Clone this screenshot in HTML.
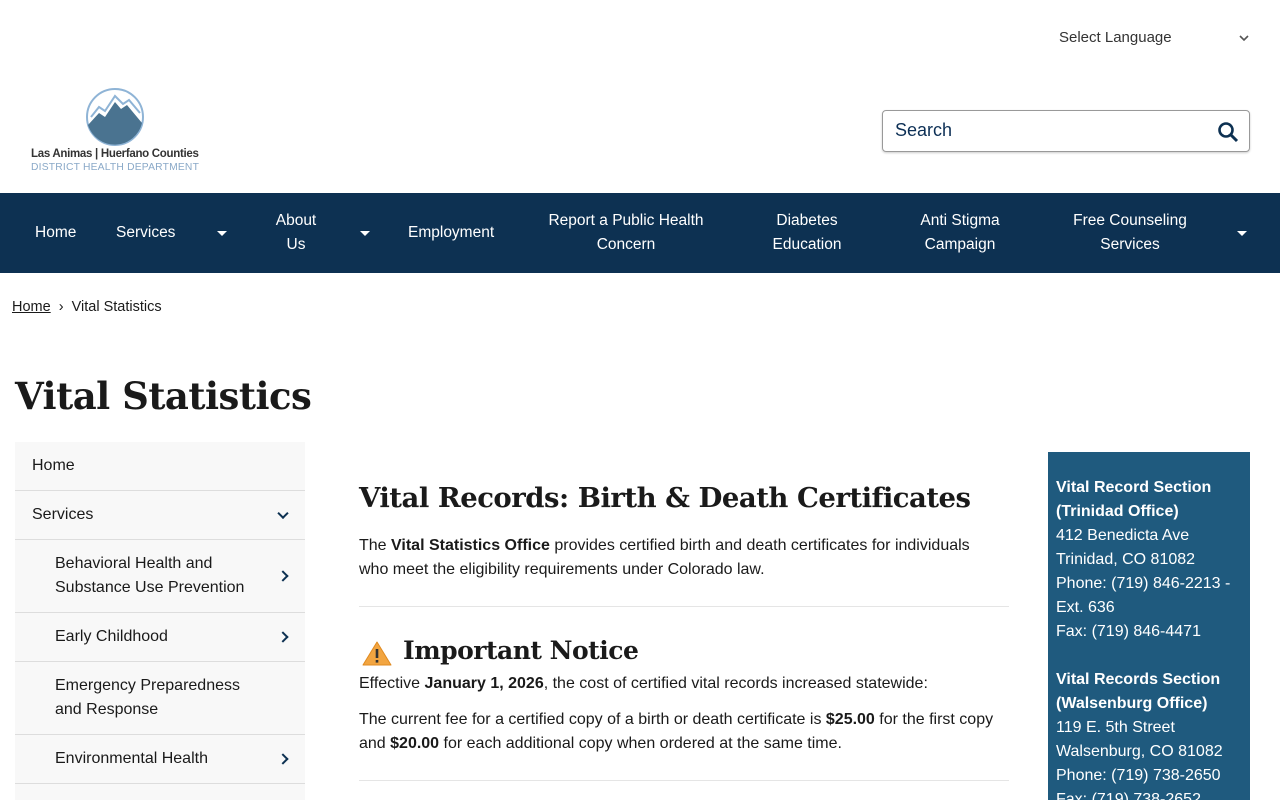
<!DOCTYPE html>
<html style="height:800px;overflow:hidden"><head><meta charset="utf-8"><style>
*{box-sizing:border-box;margin:0;padding:0}
body{width:1280px;height:800px;overflow:hidden;font-family:"Liberation Sans",sans-serif;color:#1a1a1a;background:#fff;position:relative;font-size:15.5px}
.abs{position:absolute}
.lang{left:1059px;top:29px;font-size:15px;color:#333}
.search{left:882px;top:110px;width:368px;height:42px;border:1px solid #999;border-radius:4px;box-shadow:0 1px 2px rgba(0,0,0,.2)}
.search span{position:absolute;left:12px;top:9px;font-size:18px;color:#0c2f55}
nav{position:absolute;left:0;top:193px;width:1280px;height:80px;background:#0d3152;color:#fff;font-size:15.5px}
nav div{position:absolute;text-align:center;line-height:24px}
.car{width:0;height:0;border-left:5px solid transparent;border-right:5px solid transparent;border-top:5px solid #fff;position:absolute}
h1{position:absolute;left:15px;top:374px;font-family:"DejaVu Serif",serif;font-size:37px;font-weight:bold;letter-spacing:-0.5px}
.side{position:absolute;left:15px;top:442px;width:290px;height:358px;overflow:hidden}
.side div{background:#f8f8f8;border-bottom:1px solid #ddd;padding:12px 17px;line-height:24px;position:relative;font-size:16px}
.side .sub{padding-left:40px;padding-right:36px}
.chev{position:absolute;right:18px;top:50%;width:8px;height:8px;border-right:2px solid #0d3152;border-bottom:2px solid #0d3152;transform:translateY(-50%) rotate(-45deg)}
.chev.d{transform:translateY(-70%) rotate(45deg)}
.main{position:absolute;left:359px;width:640px;line-height:24px;font-size:16px}
h2{font-family:"DejaVu Serif",serif;font-weight:bold;font-size:27.5px;letter-spacing:-0.5px}
hr{border:0;border-top:1px solid #e5e5e5}
.box{position:absolute;left:1048px;top:452px;width:202px;height:360px;background:#1f5a7e;color:#fff;padding:24px 8px;line-height:24px;font-size:16px}
</style></head><body>
<div class="abs lang">Select Language</div>
<svg class="abs" style="left:1238px;top:34px" width="12" height="8"><path d="M2 2l4 4 4-4" stroke="#555" stroke-width="1.6" fill="none"/></svg>
<svg class="abs" style="left:85px;top:87px" width="60" height="60"><circle cx="30" cy="30" r="28" fill="#fff" stroke="#8fb4d6" stroke-width="2"/><path d="M3 38 L14 26 L20 30 L30 15 L36 22 L42 18 L57 36 A28 28 0 0 1 3 38Z" fill="#4a7390"/><path d="M6 30 L14 20 L20 24 L30 9 L38 17 L44 13 L55 26" stroke="#8fb4d6" stroke-width="2" fill="none"/></svg>
<div class="abs" style="left:31px;top:148px;font-size:11.5px;font-weight:bold;color:#333;letter-spacing:-0.3px">Las Animas | Huerfano Counties</div>
<div class="abs" style="left:31px;top:162px;font-size:10.3px;color:#8aa9c8;letter-spacing:0.2px">DISTRICT HEALTH DEPARTMENT</div>
<div class="abs search"><span>Search</span><svg style="position:absolute;right:10px;top:10px" width="22" height="22"><circle cx="9" cy="9" r="6.5" stroke="#0d3152" stroke-width="2.6" fill="none"/><path d="M14 14l6 6" stroke="#0d3152" stroke-width="3"/></svg></div>
<nav>
<div style="left:35px;top:28px">Home</div>
<div style="left:116px;top:28px">Services</div><span class="car" style="left:217px;top:38px"></span>
<div style="left:266px;top:16px;width:60px">About<br>Us</div><span class="car" style="left:360px;top:38px"></span>
<div style="left:408px;top:28px">Employment</div>
<div style="left:536px;top:16px;width:180px">Report a Public Health<br>Concern</div>
<div style="left:757px;top:16px;width:100px">Diabetes<br>Education</div>
<div style="left:905px;top:16px;width:110px">Anti Stigma<br>Campaign</div>
<div style="left:1065px;top:16px;width:130px">Free Counseling<br>Services</div><span class="car" style="left:1237px;top:38px"></span>
</nav>
<div class="abs" style="left:12px;top:299px;font-size:14.5px"><u>Home</u> &nbsp;›&nbsp; Vital Statistics</div>
<h1>Vital Statistics</h1>
<div class="side">
<div>Home</div>
<div>Services<span class="chev d"></span></div>
<div class="sub">Behavioral Health and Substance Use Prevention<span class="chev"></span></div>
<div class="sub">Early Childhood<span class="chev"></span></div>
<div class="sub">Emergency Preparedness and Response</div>
<div class="sub">Environmental Health<span class="chev"></span></div>
<div class="sub">&nbsp;</div>
</div>
<div class="main" style="top:486px;width:660px"><h2>Vital Records: Birth &amp; Death Certificates</h2></div>
<div class="main" style="top:534px">The <b>Vital Statistics Office</b> provides certified birth and death certificates for individuals who meet the eligibility requirements under Colorado law.</div>
<hr class="abs" style="left:359px;top:606px;width:650px">
<svg class="abs" style="left:362px;top:640px" width="30" height="26"><path d="M15 2 L29 25 L1 25Z" fill="#f2a541" stroke="#e08a20" stroke-linejoin="round"/><rect x="13.7" y="9" width="2.6" height="9" fill="#333"/><rect x="13.7" y="20" width="2.6" height="2.6" fill="#333"/></svg>
<div class="main" style="top:639px;left:403px"><h2 style="font-size:25px">Important Notice</h2></div>
<div class="main" style="top:672px">Effective <b>January 1, 2026</b>, the cost of certified vital records increased statewide:</div>
<div class="main" style="top:708px">The current fee for a certified copy of a birth or death certificate is <b>$25.00</b> for the first copy and <b>$20.00</b> for each additional copy when ordered at the same time.</div>
<hr class="abs" style="left:359px;top:780px;width:650px">
<div class="box"><b>Vital Record Section (Trinidad Office)</b><br>412 Benedicta Ave<br>Trinidad, CO 81082<br>Phone: (719) 846-2213 - Ext. 636<br>Fax: (719) 846-4471<br><br><b>Vital Records Section (Walsenburg Office)</b><br>119 E. 5th Street<br>Walsenburg, CO 81082<br>Phone: (719) 738-2650<br>Fax: (719) 738-2652</div>
</body></html>
